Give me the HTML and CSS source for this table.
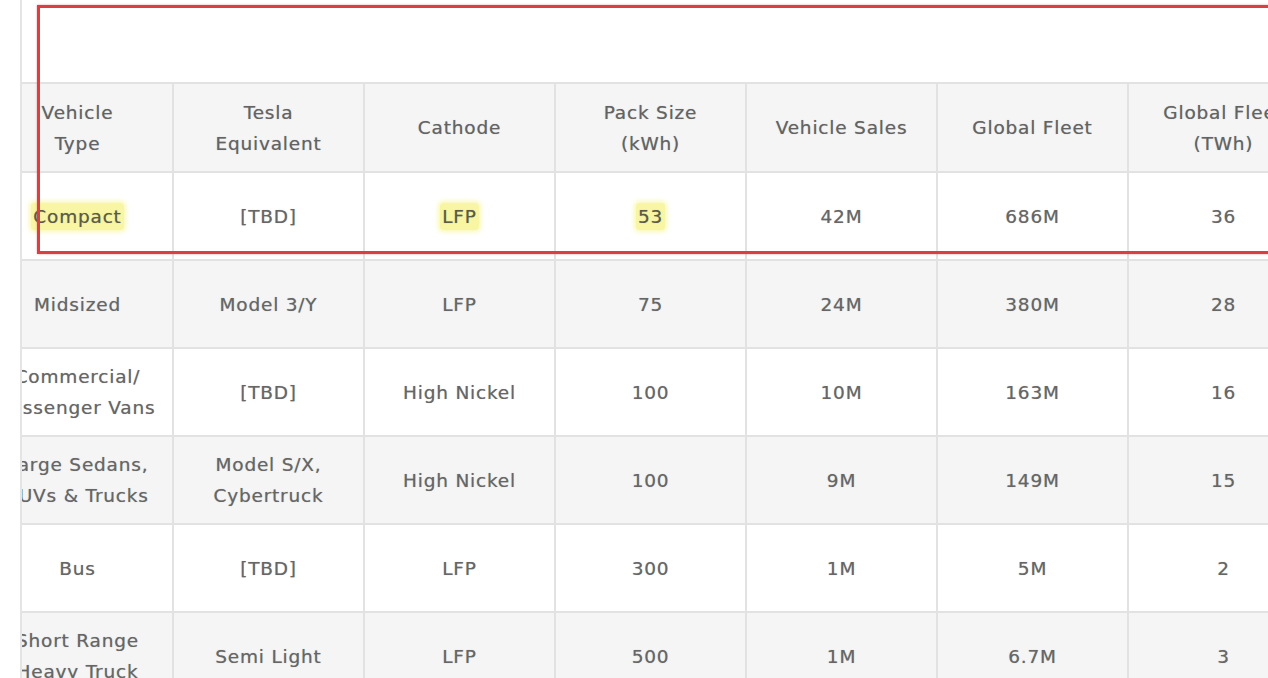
FILE: index.html
```html
<!DOCTYPE html>
<html lang="en">
<head>
<meta charset="utf-8">
<title>Vehicle battery table</title>
<link rel="stylesheet" href="styles.css">
</head>
<body>
<div class="page">
  <div class="clip">
    <div class="caption-space"></div>
    <table class="data">
      <colgroup>
        <col class="c"><col class="c"><col class="c"><col class="c"><col class="c"><col class="c"><col class="c">
      </colgroup>
      <thead>
        <tr class="head">
          <th>Vehicle<br>Type</th>
          <th>Tesla<br>Equivalent</th>
          <th>Cathode</th>
          <th>Pack Size<br>(kWh)</th>
          <th>Vehicle Sales</th>
          <th>Global Fleet</th>
          <th>Global Fleet<br>(TWh)</th>
        </tr>
      </thead>
      <tbody>
        <tr class="odd">
          <td><span class="hl">Compact</span></td>
          <td>[TBD]</td>
          <td><span class="hl">LFP</span></td>
          <td><span class="hl">53</span></td>
          <td>42M</td>
          <td>686M</td>
          <td>36</td>
        </tr>
        <tr class="even">
          <td>Midsized</td>
          <td>Model 3/Y</td>
          <td>LFP</td>
          <td>75</td>
          <td>24M</td>
          <td>380M</td>
          <td>28</td>
        </tr>
        <tr class="odd">
          <td>Commercial/<br>Passenger Vans</td>
          <td>[TBD]</td>
          <td>High Nickel</td>
          <td>100</td>
          <td>10M</td>
          <td>163M</td>
          <td>16</td>
        </tr>
        <tr class="even">
          <td>Large Sedans,<br>SUVs &amp; Trucks</td>
          <td>Model S/X,<br>Cybertruck</td>
          <td>High Nickel</td>
          <td>100</td>
          <td>9M</td>
          <td>149M</td>
          <td>15</td>
        </tr>
        <tr class="odd">
          <td>Bus</td>
          <td>[TBD]</td>
          <td>LFP</td>
          <td>300</td>
          <td>1M</td>
          <td>5M</td>
          <td>2</td>
        </tr>
        <tr class="even">
          <td>Short Range<br>Heavy Truck</td>
          <td>Semi Light</td>
          <td>LFP</td>
          <td>500</td>
          <td>1M</td>
          <td>6.7M</td>
          <td>3</td>
        </tr>
      </tbody>
    </table>
  </div>
  <div class="annotation"></div>
</div>
</body>
</html>
```

FILE: styles.css
```css
html, body {
  margin: 0;
  padding: 0;
  background: #ffffff;
}

.page {
  position: relative;
  width: 1268px;
  height: 678px;
  overflow: hidden;
  padding-left: 20px;
  box-sizing: border-box;
}

.clip {
  height: 678px;
  overflow: hidden;
  border-left: 2px solid #e4e4e4;
}

.caption-space {
  height: 82px;
  background: #ffffff;
}

.data {
  border-collapse: collapse;
  table-layout: fixed;
  width: 1337px;
  margin-left: -41px;
  font-family: "DejaVu Sans", "Liberation Sans", sans-serif;
  font-size: 18.5px;
  letter-spacing: 0.8px;
  line-height: 31px;
  color: #666666;
  text-shadow: 0 0 0.8px rgba(90, 90, 90, 0.55);
}

.data .c {
  width: 191px;
}

.data th,
.data td {
  border: 2px solid #e2e2e2;
  text-align: center;
  vertical-align: middle;
  padding: 0 4px;
  white-space: nowrap;
  overflow: hidden;
}

.data th {
  font-weight: normal;
  height: 87px;
  background: #f5f5f5;
  color: #636363;
}

.data td {
  height: 86px;
}

.odd td {
  background: #ffffff;
}

.even td {
  background: #f5f5f5;
}

.hl {
  background: #f8f6a4;
  color: #5b5b45;
  padding: 3px 2px;
  border-radius: 3px;
  box-shadow: 0 0 4px 2px rgba(248, 246, 150, 0.7);
}

.annotation {
  position: absolute;
  left: 37px;
  top: 5px;
  width: 1260px;
  height: 243px;
  border: 3px solid #d9403f;
  box-shadow: 0 0 2px rgba(217, 64, 63, 0.5);
  pointer-events: none;
}
```
